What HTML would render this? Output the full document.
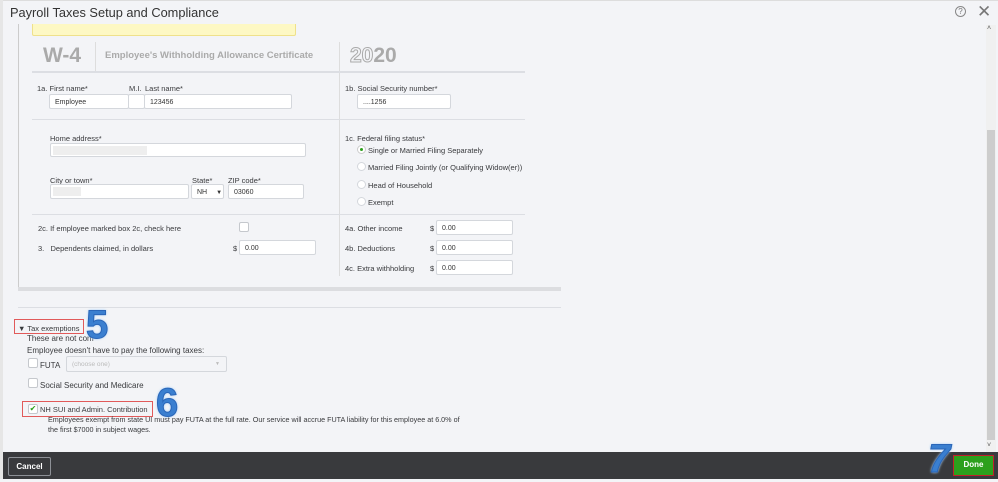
<!DOCTYPE html>
<html><head><style>
*{box-sizing:border-box;margin:0;padding:0}
body{width:998px;height:479px;overflow:hidden;background:#f3f4f7;font-family:"Liberation Sans",sans-serif;position:relative;color:#333}
.a{position:absolute}
.t{position:absolute;font-size:7.5px;color:#393a3d;white-space:nowrap}
.e{font-size:8px}
.in{position:absolute;background:#fff;border:1px solid #d4d7dc;border-radius:2px;font-size:7px;padding:4px 0 0 5px;color:#333}
.hl{position:absolute;height:1px;background:#dcdee3}
.rad{position:absolute;width:9px;height:9px;border-radius:50%;background:#fff;border:1px solid #d4d7dc}
.cb{position:absolute;width:10px;height:10px;background:#fff;border:1px solid #c5c8cd;border-radius:2px}
.num{position:absolute;font-weight:bold;color:#3a7fd0;font-size:40px;text-shadow:0 0 2px #9cc7f2,0 0 3px #bcdcff;-webkit-text-stroke:1px #2a66b8}
</style></head><body>
<div class="a" style="left:0;top:0;width:998px;height:1px;background:#ddd"></div>
<div class="a" style="left:0;top:0;width:3px;height:479px;background:#e6e6e6"></div>
<div class="t" style="left:10px;top:5px;font-size:12.8px;color:#333">Payroll Taxes Setup and Compliance</div>
<div class="a" style="left:955px;top:6px;width:11px;height:11px;border:1px solid #888;border-radius:50%;font-size:8px;text-align:center;line-height:9px;color:#777">?</div>
<div class="a" style="left:977px;top:2px;font-size:17px;color:#777">✕</div>
<div class="a" style="left:986px;top:25px;width:10px;height:427px;background:#f0f0f0"></div>
<div class="a" style="left:987px;top:130px;width:8px;height:310px;background:#cdcdcd"></div>
<div class="a" style="left:987px;top:25px;font-size:7px;color:#555">˄</div>
<div class="a" style="left:987px;top:442px;font-size:7px;color:#555">˅</div>
<div class="a" style="left:18px;top:24px;width:1px;height:266px;background:#ccc"></div>
<div class="a" style="left:18px;top:287px;width:543px;height:4px;background:#dcdde0"></div>
<div class="a" style="left:32px;top:24px;width:264px;height:12px;background:#fdf8c4;border:1px solid #efe18b;border-top:none;border-radius:0 0 2px 2px"></div>
<div class="t" style="left:43px;top:44px;font-size:21px;font-weight:bold;color:#aaa">W-4</div>
<div class="a" style="left:95px;top:42px;width:1px;height:29px;background:#ddd"></div>
<div class="t" style="left:105px;top:50px;font-size:9.5px;font-weight:bold;color:#aaa">Employee's Withholding Allowance Certificate</div>
<div class="t" style="left:350px;top:44px;font-size:21px;font-weight:bold;color:#aaa"><span style="color:#f3f4f7;-webkit-text-stroke:1px #aaa">20</span>20</div>
<div class="a" style="left:339px;top:42px;width:1px;height:234px;background:#ddd"></div>
<div class="hl" style="left:32px;top:71px;width:493px;height:2px"></div>
<div class="hl" style="left:32px;top:119px;width:493px"></div>
<div class="hl" style="left:32px;top:214px;width:493px"></div>
<div class="t" style="left:37px;top:84px">1a. First name*</div>
<div class="t" style="left:129px;top:84px">M.I.</div>
<div class="t" style="left:145px;top:84px">Last name*</div>
<div class="in" style="left:49px;top:94px;width:80px;height:15px">Employee</div>
<div class="in" style="left:128px;top:94px;width:17px;height:15px"></div>
<div class="in" style="left:144px;top:94px;width:148px;height:15px">123456</div>
<div class="t" style="left:345px;top:84px">1b. Social Security number*</div>
<div class="in" style="left:357px;top:94px;width:94px;height:15px">....1256</div>
<div class="t" style="left:50px;top:134px">Home address*</div>
<div class="in" style="left:50px;top:143px;width:256px;height:14px"><div style="position:absolute;left:2px;top:2px;width:94px;height:9px;background:#eee"></div></div>
<div class="t" style="left:345px;top:134px">1c. Federal filing status*</div>
<div class="rad" style="left:357px;top:145px;border-color:#ccc"><div style="position:absolute;left:2px;top:2px;width:3px;height:3px;border-radius:50%;background:#2ca01c"></div></div>
<div class="t" style="left:368px;top:146px">Single or Married Filing Separately</div>
<div class="rad" style="left:357px;top:162px"></div>
<div class="t" style="left:368px;top:163px">Married Filing Jointly (or Qualifying Widow(er))</div>
<div class="rad" style="left:357px;top:180px"></div>
<div class="t" style="left:368px;top:181px">Head of Household</div>
<div class="rad" style="left:357px;top:197px"></div>
<div class="t" style="left:368px;top:198px">Exempt</div>
<div class="t" style="left:50px;top:176px">City or town*</div>
<div class="t" style="left:192px;top:176px">State*</div>
<div class="t" style="left:228px;top:176px">ZIP code*</div>
<div class="in" style="left:50px;top:184px;width:139px;height:15px"><div style="position:absolute;left:2px;top:2px;width:28px;height:9px;background:#eee"></div></div>
<div class="in" style="left:191px;top:184px;width:33px;height:15px">NH <span style="font-size:6px;margin-left:7px">▼</span></div>
<div class="in" style="left:228px;top:184px;width:76px;height:15px">03060</div>
<div class="t" style="left:38px;top:224px">2c. If employee marked box 2c, check here</div>
<div class="cb" style="left:239px;top:222px"></div>
<div class="t" style="left:38px;top:244px">3.&nbsp;&nbsp;&nbsp;Dependents claimed, in dollars</div>
<div class="t" style="left:233px;top:244px">$</div>
<div class="in" style="left:239px;top:240px;width:77px;height:15px">0.00</div>
<div class="t" style="left:345px;top:224px">4a. Other income</div>
<div class="t" style="left:345px;top:244px">4b. Deductions</div>
<div class="t" style="left:345px;top:264px">4c. Extra withholding</div>
<div class="t" style="left:430px;top:224px">$</div><div class="in" style="left:436px;top:220px;width:77px;height:15px">0.00</div>
<div class="t" style="left:430px;top:244px">$</div><div class="in" style="left:436px;top:240px;width:77px;height:15px">0.00</div>
<div class="t" style="left:430px;top:264px">$</div><div class="in" style="left:436px;top:260px;width:77px;height:15px">0.00</div>
<div class="hl" style="left:18px;top:307px;width:543px"></div>
<div class="a" style="left:14px;top:319px;width:70px;height:15px;border:1.5px solid #e15a5a"></div>
<div class="t" style="left:18px;top:324px">▼ Tax exemptions</div>
<div class="t e" style="left:27px;top:334px">These are not com</div>
<div class="num" style="left:86px;top:303px">5</div>
<div class="t e" style="left:27px;top:346px">Employee doesn't have to pay the following taxes:</div>
<div class="cb" style="left:28px;top:358px"></div>
<div class="t e" style="left:40px;top:361px">FUTA</div>
<div class="in" style="left:66px;top:356px;width:161px;height:16px;background:#f3f4f7;color:#bbb;font-size:6.5px">(choose one)<span style="position:absolute;right:6px;font-size:5px">▼</span></div>
<div class="cb" style="left:28px;top:378px"></div>
<div class="t e" style="left:40px;top:381px">Social Security and Medicare</div>
<div class="a" style="left:22px;top:401px;width:131px;height:16px;border:1.5px solid #e15a5a"></div>
<div class="cb" style="left:28px;top:404px;color:#2ca01c;font-size:8px;line-height:8px;text-align:center">✔</div>
<div class="t" style="left:40px;top:405px">NH SUI and Admin. Contribution</div>
<div class="num" style="left:156px;top:381px">6</div>
<div class="t" style="left:48px;top:415px;font-size:7.2px">Employees exempt from state UI must pay FUTA at the full rate. Our service will accrue FUTA liability for this employee at 6.0% of</div>
<div class="t" style="left:48px;top:425px;font-size:7.2px">the first $7000 in subject wages.</div>
<div class="a" style="left:3px;top:452px;width:995px;height:27px;background:#393a3d"></div>
<div class="a" style="left:8px;top:457px;width:43px;height:19px;border:1px solid #8d9096;border-radius:2px;color:#fff;font-size:8px;font-weight:bold;text-align:center;line-height:17px">Cancel</div>
<div class="num" style="left:928px;top:437px;font-style:italic">7</div>
<div class="a" style="left:953px;top:455px;width:41px;height:21px;border:1.5px solid #c0202a;background:#2ca01c;color:#fff;font-size:8px;font-weight:bold;text-align:center;line-height:18px">Done</div>
</body></html>
